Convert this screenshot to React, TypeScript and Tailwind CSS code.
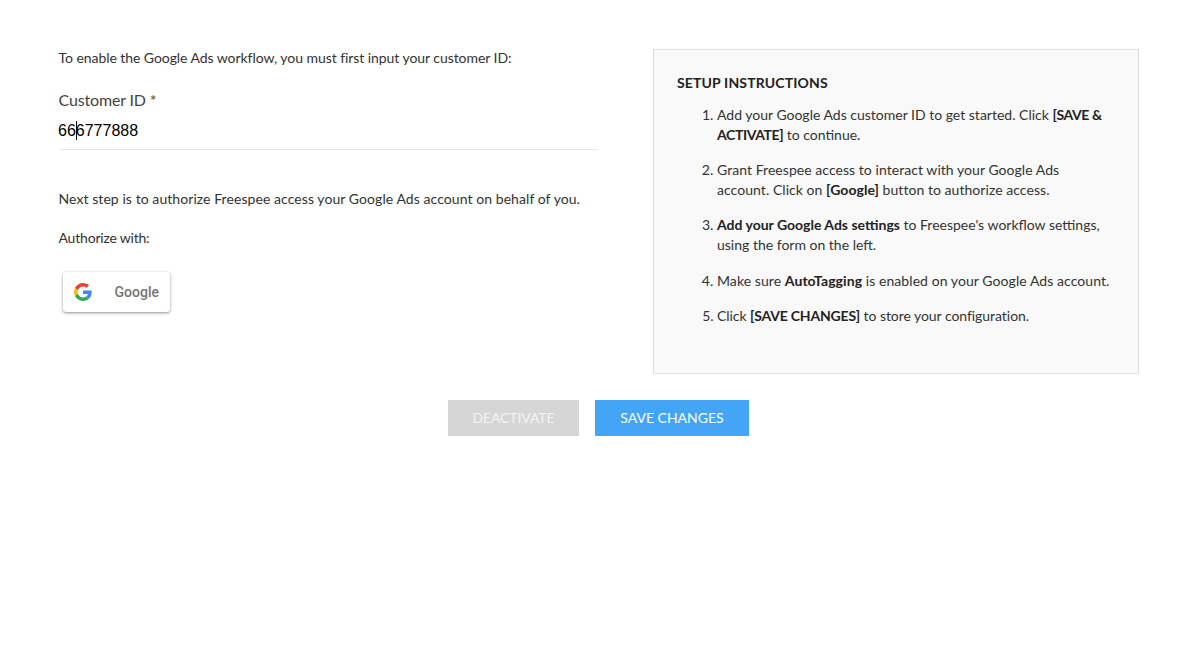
const font = { fontFamily: "Lato, 'Open Sans', sans-serif" };

const GoogleMark = () => (
  <svg width="18" height="18" viewBox="0 0 48 48">
    <path fill="#EA4335" d="M24 9.5c3.54 0 6.71 1.22 9.21 3.6l6.85-6.85C35.9 2.38 30.47 0 24 0 14.62 0 6.51 5.38 2.56 13.22l7.98 6.19C12.43 13.72 17.74 9.5 24 9.5z" />
    <path fill="#4285F4" d="M46.98 24.55c0-1.57-.15-3.09-.38-4.55H24v9.02h12.94c-.58 2.96-2.26 5.48-4.78 7.18l7.73 6c4.51-4.18 7.09-10.36 7.09-17.65z" />
    <path fill="#FBBC05" d="M10.53 28.59c-.48-1.45-.76-2.99-.76-4.59s.27-3.14.76-4.59l-7.98-6.19C.92 16.46 0 20.12 0 24c0 3.88.92 7.54 2.56 10.78l7.97-6.19z" />
    <path fill="#34A853" d="M24 48c6.48 0 11.93-2.13 15.89-5.81l-7.73-6c-2.15 1.45-4.92 2.3-8.16 2.3-6.26 0-11.57-4.22-13.47-9.91l-7.98 6.19C6.51 42.62 14.62 48 24 48z" />
  </svg>
);

export default function App() {
  return (
    <div className="min-h-[648px] w-full bg-white pt-[49px] text-[#333]" style={font}>
      <div className="flex pl-[58px] pr-[56px]">
        <div className="w-[541px] shrink-0">
          <p className="pl-[0.5px] text-[14px] leading-[18px] tracking-[-0.06px]">
            To enable the Google Ads workflow, you must first input your customer ID:
          </p>
          <label className="mt-[23px] block pl-[0.5px] text-[16px] leading-[20px] tracking-[-0.15px] text-[#444]">Customer ID *</label>
          <div className="ml-[2px] mt-[11px] h-[29px] w-[538px] border-b border-[#e8e8e8]">
            <span className="relative -ml-[2px] block font-['Liberation_Sans'] text-[16px] leading-[19px] text-black">
              666777888
              <span className="absolute left-[17.5px] top-0 h-[19px] w-[1px] bg-black" />
            </span>
          </div>
          <p className="mt-[40px] pl-[0.5px] text-[14px] leading-[18px] tracking-[0.07px]">
            Next step is to authorize Freespee access your Google Ads account on behalf of you.
          </p>
          <p className="mt-[21px] pl-[0.5px] text-[14px] leading-[18px] tracking-[-0.2px]">Authorize with:</p>
          <button className="ml-[5px] mt-[25px] flex h-[40px] w-[107px] items-center justify-between rounded-[3px] bg-white pl-[11px] pr-[11px] shadow-[0_1px_3px_rgba(0,0,0,0.45)]">
            <GoogleMark />
            <span className="font-['Roboto'] text-[14px] font-medium text-[#757575]">Google</span>
          </button>
        </div>
        <div className="ml-[54px] h-[325px] w-[486px] border border-[#e0e0e0] bg-[#f9f9f9] pl-[23px] pr-[24px] pt-[24px]">
          <h3 className="text-[14px] font-bold leading-[18px] tracking-[0.15px] text-[#222]">SETUP INSTRUCTIONS</h3>
          <ol className="mt-[13px] list-decimal pl-[40px] text-[14px] leading-[19.6px]">
            <li>
              Add your Google Ads customer ID to get started. Click <b className="tracking-[-0.4px] text-[#222]">[SAVE &amp;<br />ACTIVATE]</b> to continue.
            </li>
            <li className="mt-[16px] tracking-[0.05px]">
              Grant Freespee access to interact with your Google Ads<br />account. Click on <b className="text-[#222]">[Google]</b> button to authorize access.
            </li>
            <li className="mt-[16px]">
              <b className="text-[#222]">Add your Google Ads settings</b> to Freespee's workflow settings,<br />using the form on the left.
            </li>
            <li className="mt-[16px] tracking-[0.07px]">
              Make sure <b className="text-[#222]">AutoTagging</b> is enabled on your Google Ads account.
            </li>
            <li className="mt-[16px] tracking-[-0.05px]">
              Click <b className="tracking-[-0.2px] text-[#222]">[SAVE CHANGES]</b> to store your configuration.
            </li>
          </ol>
        </div>
      </div>
      <div className="mt-[26px] flex justify-center gap-[16px] pl-[2px]">
        <button className="h-[36px] w-[131px] bg-[#d6d6d6] pb-[2px] text-[14px] tracking-[-0.1px] text-[#f4f4f4]">DEACTIVATE</button>
        <button className="h-[36px] w-[154px] bg-[#42a5f5] pb-[2px] text-[14px] text-white">SAVE CHANGES</button>
      </div>
    </div>
  );
}
